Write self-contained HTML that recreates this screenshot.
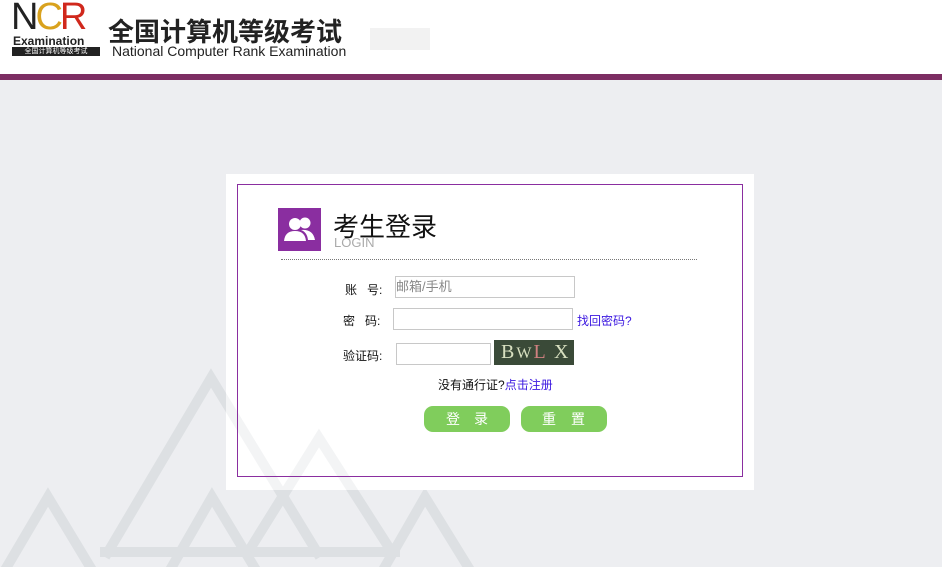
<!DOCTYPE html>
<html><head><meta charset="utf-8"><style>
body{margin:0;width:942px;height:567px;overflow:hidden;background:#edeef1;font-family:"Liberation Sans","Noto Sans CJK SC",sans-serif;position:relative}
.hdr{position:absolute;left:0;top:0;width:942px;height:74px;background:#fff}
.bar{position:absolute;left:0;top:74px;width:942px;height:6px;background:#7d2e63}
.box{position:absolute;left:226px;top:174px;width:528px;height:316px;background:#fff}
.in{position:absolute;left:237px;top:184px;width:504px;height:291px;border:1px solid #8a2ea0}
.a{position:absolute;white-space:nowrap}
.inp{position:absolute;border:1px solid #c8c8c8;height:20px;background:#fff}
.btn{position:absolute;top:406px;width:86px;height:26px;background:#80cd5c;border-radius:9px;color:#fff;font-size:14px;line-height:26px}
.btn span{position:absolute;top:0}
</style></head><body>
<svg style="position:absolute;left:0;top:0" width="942" height="567">
<g fill="none" stroke="#dde0e3" stroke-width="10">
<polyline points="105,557 211,378 320,557"/>
<line x1="100" y1="552" x2="330" y2="552"/>
<polyline points="245,557 319,438 395,557"/>
<line x1="240" y1="552" x2="400" y2="552"/>
<polyline points="5,570 48,497 92,570"/>
<polyline points="170,570 212,497 256,570"/>
<polyline points="383,570 425,497 470,570"/>
</g></svg>
<div class="hdr">
<div class="a" style="left:11px;top:-4px;font:38px 'Liberation Sans';color:#222;letter-spacing:-3px">N<span style="color:#d9a21e">C</span><span style="color:#d0281c">R</span></div>
<div class="a" style="left:13px;top:34px;font:bold 12px 'Liberation Sans';color:#222">Examination</div>
<div class="a" style="left:12px;top:47px;width:88px;height:9px;background:#222;color:#fff;font-size:7px;line-height:9px;text-align:center">全国计算机等级考试</div>
<div class="a" style="left:108px;top:12px;font-size:26px;font-weight:bold;color:#222">全国计算机等级考试</div>
<div class="a" style="left:112px;top:43px;font-size:14px;color:#222">National Computer Rank Examination</div>
<div class="a" style="left:370px;top:28px;width:60px;height:22px;background:#f2f2f2"></div>
</div>
<div class="bar"></div>
<div class="box"></div>
<svg style="position:absolute;left:0;top:0" width="942" height="567" opacity="0.35">
<g fill="none" stroke="#dde0e3" stroke-width="10">
<polyline points="211,378 320,557"/>
<polyline points="245,557 319,438 395,557"/>
<line x1="226" y1="552" x2="400" y2="552"/>
</g></svg>
<div class="in"></div>
<div class="a" style="left:278px;top:208px;width:43px;height:43px;background:#8a2ea0"></div>
<svg style="position:absolute;left:283px;top:215px" width="34" height="28"><g fill="#fff"><circle cx="12" cy="9" r="6"/><path d="M1 26 Q2 16 12 16 Q22 16 23 26Z"/><circle cx="22" cy="8" r="5.5"/><path d="M18 15 Q30 14 32 25 L25 25 Q24 17 18 15Z"/></g></svg>
<div class="a" style="left:333px;top:207px;font-size:26px;color:#111">考生登录</div>
<div class="a" style="left:334px;top:235px;font-size:13px;color:#aaa">LOGIN</div>
<div class="a" style="left:281px;top:259px;width:416px;border-top:1px dotted #777"></div>
<div class="a" style="left:345px;top:281px;font-size:12px;color:#111">账&nbsp;&nbsp;&nbsp;号:</div>
<div class="inp" style="left:395px;top:276px;width:178px;font-size:13px;color:#888;line-height:20px">邮箱/手机</div>
<div class="a" style="left:343px;top:312px;font-size:12px;color:#111">密&nbsp;&nbsp;&nbsp;码:</div>
<div class="inp" style="left:393px;top:308px;width:178px"></div>
<div class="a" style="left:577px;top:312px;font-size:12px;color:#3a16e0">找回密码?</div>
<div class="a" style="left:343px;top:347px;font-size:12px;color:#111">验证码:</div>
<div class="inp" style="left:396px;top:343px;width:93px"></div>
<div class="a" style="left:494px;top:340px;width:80px;height:25px;background:#3a4a38;color:#d8e0c0;font:20px 'Liberation Serif';line-height:25px;letter-spacing:2px">&nbsp;B<span style="font-size:16px">W</span><span style="color:#d08080">L</span> X</div>
<div class="a" style="left:438px;top:376px;font-size:12px;color:#111">没有通行证?<span style="color:#3a16e0">点击注册</span></div>
<div class="btn" style="left:424px"><span style="left:22px">登</span><span style="left:50px">录</span></div>
<div class="btn" style="left:521px"><span style="left:21px">重</span><span style="left:50px">置</span></div>
</body></html>
